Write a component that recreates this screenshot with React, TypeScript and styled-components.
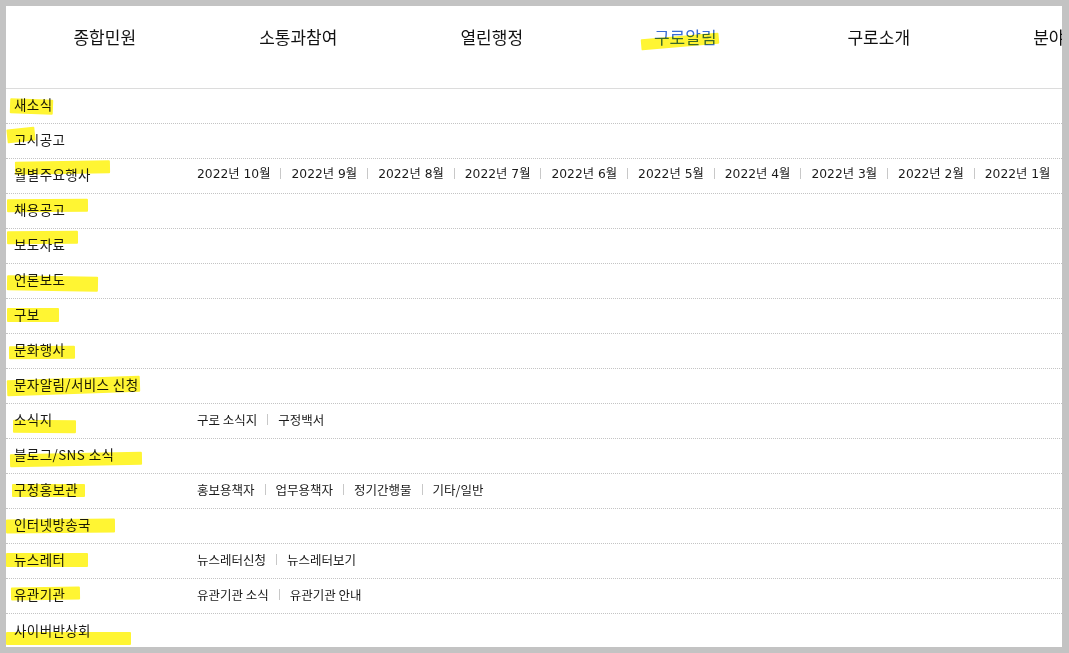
import React from "react";
import styled, { createGlobalStyle } from "styled-components";

const GlobalStyle = createGlobalStyle`
  html, body {
    margin: 0;
    padding: 0;
    background: #fff;
  }
  body {
    font-family: "Noto Sans CJK KR", "Noto Sans", sans-serif;
    color: #222;
  }
`;

const Frame = styled.div`
  box-sizing: border-box;
  height: 653px;
  width: 1069px;
  border-style: solid;
  border-color: #c3c3c3;
  border-width: 6px 7px 6px 6px;
  overflow: hidden;
  background: #fff;
`;

const Header = styled.nav`
  box-sizing: border-box;
  height: 83px;
  border-bottom: 1px solid #dcdcdc;
  display: flex;
  padding: 18px 0 0 2px;
  overflow: hidden;
`;

const NavItem = styled.a<{ $active?: boolean }>`
  position: relative;
  flex: 0 0 193.5px;
  text-align: center;
  font-size: 17px;
  line-height: 26px;
  color: ${(p) => (p.$active ? "#3a6cd4" : "#111")};
  text-decoration: none;
  white-space: nowrap;
`;

const Row = styled.div`
  position: relative;
  box-sizing: border-box;
  height: 35px;
  padding-bottom: 4px;
  border-bottom: 1px dotted #c4c4c4;
  display: grid;
  grid-template-columns: 191px 1fr;
  align-items: center;
  &:last-child {
    border-bottom: none;
  }
`;

const Label = styled.a`
  padding-left: 8px;
  font-size: 13.5px;
  letter-spacing: 0.4px;
  color: #1a1a1a;
  text-decoration: none;
  white-space: nowrap;
`;

const SubList = styled.ul<{ $numeric?: boolean }>`
  list-style: none;
  margin: 0;
  padding: 0;
  display: flex;
  align-items: center;
  white-space: nowrap;
  font-family: ${(p) =>
    p.$numeric
      ? `"DejaVu Sans", "Noto Sans CJK KR", sans-serif`
      : `"Noto Sans CJK KR", sans-serif`};
  font-size: ${(p) => (p.$numeric ? "12.3px" : "12.5px")};
  margin-top: ${(p) => (p.$numeric ? "-2px" : "0")};
`;

const SubItem = styled.li`
  display: flex;
  align-items: center;
  color: #1a1a1a;
  & + &::before {
    content: "";
    display: block;
    width: 1px;
    height: 11px;
    background: #c8c8c8;
    margin: 0 10px;
  }
`;

// highlighter strokes drawn over the screenshot
const Mark = styled.span<{
  $x: number;
  $y: number;
  $w: number;
  $h: number;
  $rot?: number;
}>`
  position: absolute;
  left: ${(p) => p.$x}px;
  top: ${(p) => p.$y}px;
  width: ${(p) => p.$w}px;
  height: ${(p) => p.$h}px;
  background: #fff533;
  mix-blend-mode: multiply;
  transform: rotate(${(p) => p.$rot ?? 0}deg);
  border-radius: 1px;
  pointer-events: none;
`;

type Menu = {
  name: string;
  subs?: string[];
  numeric?: boolean;
  mark: [number, number, number, number, number?];
};

const months = [10, 9, 8, 7, 6, 5, 4, 3, 2, 1].map((m) => `2022년 ${m}월`);

const menus: Menu[] = [
  { name: "새소식", mark: [4, 10, 43, 15, 2] },
  { name: "고시공고", mark: [1, 4, 28, 14, -6] },
  { name: "월별주요행사", subs: months, numeric: true, mark: [9, 2, 95, 13, -1] },
  { name: "채용공고", mark: [1, 5, 81, 13, -0.5] },
  { name: "보도자료", mark: [1, 2, 71, 13, -0.5] },
  { name: "언론보도", mark: [1, 12, 91, 15, 1] },
  { name: "구보", mark: [1, 9, 52, 14, 0] },
  { name: "문화행사", mark: [3, 12, 66, 13, -0.5] },
  { name: "문자알림/서비스 신청", mark: [1, 9, 133, 16, -2] },
  { name: "소식지", subs: ["구로 소식지", "구정백서"], mark: [7, 16, 63, 13, 0.5] },
  { name: "블로그/SNS 소식", mark: [4, 14, 132, 13, -1] },
  {
    name: "구정홍보관",
    subs: ["홍보용책자", "업무용책자", "정기간행물", "기타/일반"],
    mark: [6, 10, 73, 13, 0],
  },
  { name: "인터넷방송국", mark: [0, 10, 109, 14, -0.5] },
  { name: "뉴스레터", subs: ["뉴스레터신청", "뉴스레터보기"], mark: [0, 9, 82, 14, 0] },
  { name: "유관기관", subs: ["유관기관 소식", "유관기관 안내"], mark: [5, 8, 69, 13, -1] },
  { name: "사이버반상회", mark: [0, 18, 125, 13, 0] },
];

const navs = ["종합민원", "소통과참여", "열린행정", "구로알림", "구로소개", "분야별정보"];

export default function App() {
  return (
    <>
      <GlobalStyle />
      <Frame>
        <Header>
          {navs.map((n) => (
            <NavItem key={n} href="#" $active={n === "구로알림"}>
              {n}
              {n === "구로알림" && <Mark $x={52} $y={12} $w={78} $h={11} $rot={-5} />}
            </NavItem>
          ))}
        </Header>
        {menus.map((m) => (
          <Row key={m.name}>
            <Label href="#">{m.name}</Label>
            {m.subs ? (
              <SubList $numeric={m.numeric}>
                {m.subs.map((s) => (
                  <SubItem key={s}>{s}</SubItem>
                ))}
              </SubList>
            ) : (
              <span />
            )}
            <Mark
              $x={m.mark[0]}
              $y={m.mark[1]}
              $w={m.mark[2]}
              $h={m.mark[3]}
              $rot={m.mark[4]}
            />
          </Row>
        ))}
      </Frame>
    </>
  );
}
